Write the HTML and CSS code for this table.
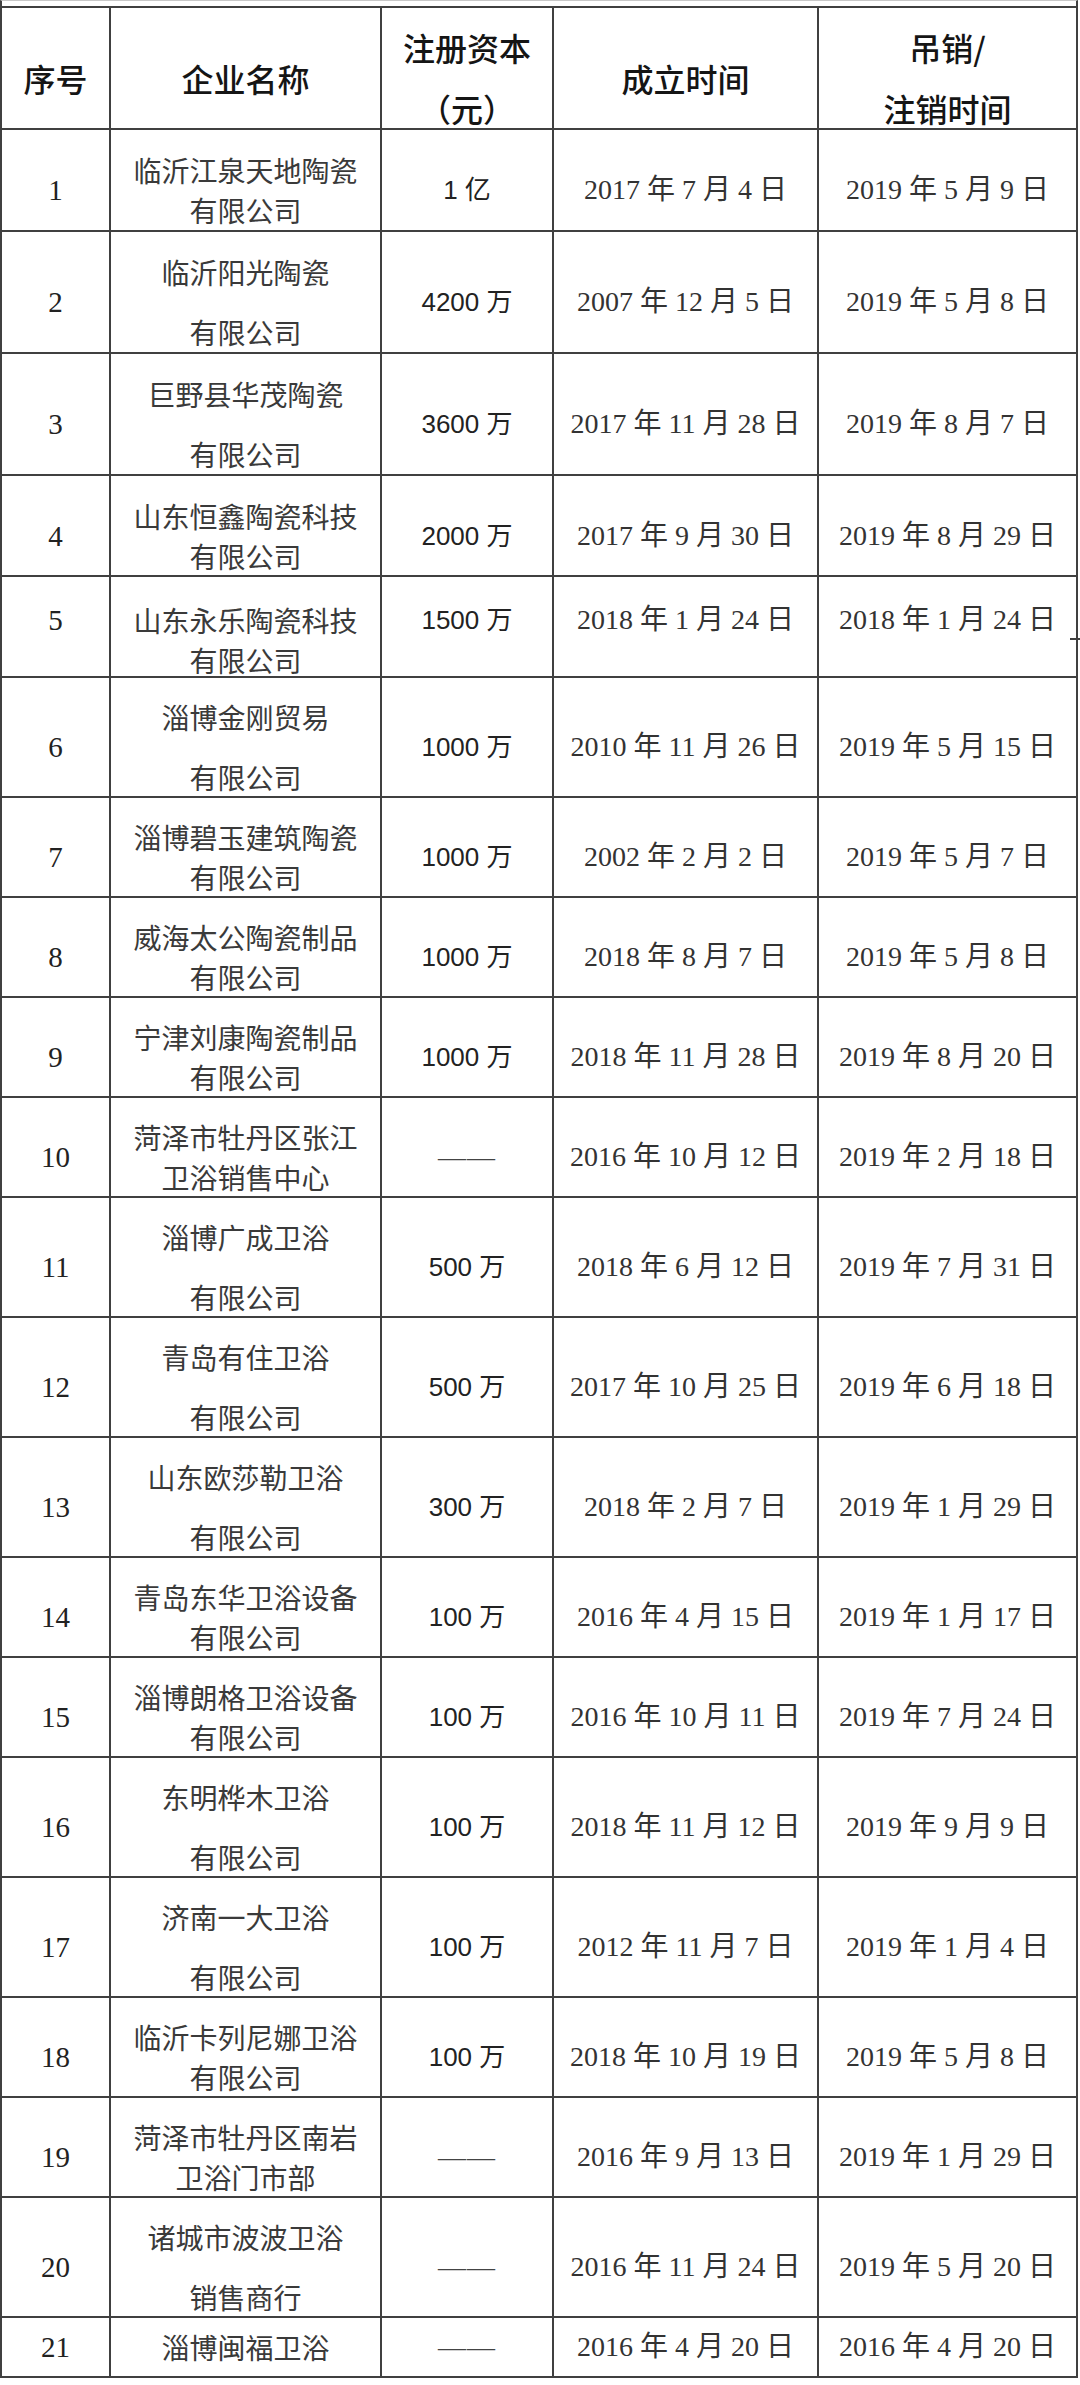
FILE: index.html
```html
<!DOCTYPE html>
<html lang="zh-CN">
<head>
<meta charset="utf-8">
<title>企业名单</title>
<link rel="stylesheet" href="styles.css">
</head>
<body>
<div class="sheet">
  <div class="prev"></div>
  <div class="tbl">
    <div class="row h122 head">
      <div class="c"><span class="ln">序号</span></div>
      <div class="c"><span class="ln">企业名称</span></div>
      <div class="c"><span class="ln">注册资本</span><span class="ln">（元）</span></div>
      <div class="c"><span class="ln">成立时间</span></div>
      <div class="c"><span class="ln">吊销/</span><span class="ln">注销时间</span></div>
    </div>

    <div class="row h102">
      <div class="c no">1</div>
      <div class="c nm"><span class="ln">临沂江泉天地陶瓷</span><span class="ln">有限公司</span></div>
      <div class="c cap">1 亿</div>
      <div class="c dt">2017 年 7 月 4 日</div>
      <div class="c dt">2019 年 5 月 9 日</div>
    </div>
    <div class="row h122">
      <div class="c no">2</div>
      <div class="c nm gap"><span class="ln">临沂阳光陶瓷</span><span class="ln">有限公司</span></div>
      <div class="c cap">4200 万</div>
      <div class="c dt">2007 年 12 月 5 日</div>
      <div class="c dt">2019 年 5 月 8 日</div>
    </div>
    <div class="row h122">
      <div class="c no">3</div>
      <div class="c nm gap"><span class="ln">巨野县华茂陶瓷</span><span class="ln">有限公司</span></div>
      <div class="c cap">3600 万</div>
      <div class="c dt">2017 年 11 月 28 日</div>
      <div class="c dt">2019 年 8 月 7 日</div>
    </div>
    <div class="row h101">
      <div class="c no">4</div>
      <div class="c nm"><span class="ln">山东恒鑫陶瓷科技</span><span class="ln">有限公司</span></div>
      <div class="c cap">2000 万</div>
      <div class="c dt">2017 年 9 月 30 日</div>
      <div class="c dt">2019 年 8 月 29 日</div>
    </div>
    <div class="row h101 top tick">
      <div class="c no">5</div>
      <div class="c nm"><span class="ln">山东永乐陶瓷科技</span><span class="ln">有限公司</span></div>
      <div class="c cap">1500 万</div>
      <div class="c dt">2018 年 1 月 24 日</div>
      <div class="c dt">2018 年 1 月 24 日</div>
    </div>
    <div class="row h120">
      <div class="c no">6</div>
      <div class="c nm gap"><span class="ln">淄博金刚贸易</span><span class="ln">有限公司</span></div>
      <div class="c cap">1000 万</div>
      <div class="c dt">2010 年 11 月 26 日</div>
      <div class="c dt">2019 年 5 月 15 日</div>
    </div>
    <div class="row h100">
      <div class="c no">7</div>
      <div class="c nm"><span class="ln">淄博碧玉建筑陶瓷</span><span class="ln">有限公司</span></div>
      <div class="c cap">1000 万</div>
      <div class="c dt">2002 年 2 月 2 日</div>
      <div class="c dt">2019 年 5 月 7 日</div>
    </div>
    <div class="row h100">
      <div class="c no">8</div>
      <div class="c nm"><span class="ln">威海太公陶瓷制品</span><span class="ln">有限公司</span></div>
      <div class="c cap">1000 万</div>
      <div class="c dt">2018 年 8 月 7 日</div>
      <div class="c dt">2019 年 5 月 8 日</div>
    </div>
    <div class="row h100">
      <div class="c no">9</div>
      <div class="c nm"><span class="ln">宁津刘康陶瓷制品</span><span class="ln">有限公司</span></div>
      <div class="c cap">1000 万</div>
      <div class="c dt">2018 年 11 月 28 日</div>
      <div class="c dt">2019 年 8 月 20 日</div>
    </div>
    <div class="row h100">
      <div class="c no">10</div>
      <div class="c nm"><span class="ln">菏泽市牡丹区张江</span><span class="ln">卫浴销售中心</span></div>
      <div class="c cap"><span class="dash">——</span></div>
      <div class="c dt">2016 年 10 月 12 日</div>
      <div class="c dt">2019 年 2 月 18 日</div>
    </div>
    <div class="row h120">
      <div class="c no">11</div>
      <div class="c nm gap"><span class="ln">淄博广成卫浴</span><span class="ln">有限公司</span></div>
      <div class="c cap">500 万</div>
      <div class="c dt">2018 年 6 月 12 日</div>
      <div class="c dt">2019 年 7 月 31 日</div>
    </div>
    <div class="row h120">
      <div class="c no">12</div>
      <div class="c nm gap"><span class="ln">青岛有住卫浴</span><span class="ln">有限公司</span></div>
      <div class="c cap">500 万</div>
      <div class="c dt">2017 年 10 月 25 日</div>
      <div class="c dt">2019 年 6 月 18 日</div>
    </div>
    <div class="row h120">
      <div class="c no">13</div>
      <div class="c nm gap"><span class="ln">山东欧莎勒卫浴</span><span class="ln">有限公司</span></div>
      <div class="c cap">300 万</div>
      <div class="c dt">2018 年 2 月 7 日</div>
      <div class="c dt">2019 年 1 月 29 日</div>
    </div>
    <div class="row h100">
      <div class="c no">14</div>
      <div class="c nm"><span class="ln">青岛东华卫浴设备</span><span class="ln">有限公司</span></div>
      <div class="c cap">100 万</div>
      <div class="c dt">2016 年 4 月 15 日</div>
      <div class="c dt">2019 年 1 月 17 日</div>
    </div>
    <div class="row h100">
      <div class="c no">15</div>
      <div class="c nm"><span class="ln">淄博朗格卫浴设备</span><span class="ln">有限公司</span></div>
      <div class="c cap">100 万</div>
      <div class="c dt">2016 年 10 月 11 日</div>
      <div class="c dt">2019 年 7 月 24 日</div>
    </div>
    <div class="row h120">
      <div class="c no">16</div>
      <div class="c nm gap"><span class="ln">东明桦木卫浴</span><span class="ln">有限公司</span></div>
      <div class="c cap">100 万</div>
      <div class="c dt">2018 年 11 月 12 日</div>
      <div class="c dt">2019 年 9 月 9 日</div>
    </div>
    <div class="row h120">
      <div class="c no">17</div>
      <div class="c nm gap"><span class="ln">济南一大卫浴</span><span class="ln">有限公司</span></div>
      <div class="c cap">100 万</div>
      <div class="c dt">2012 年 11 月 7 日</div>
      <div class="c dt">2019 年 1 月 4 日</div>
    </div>
    <div class="row h100">
      <div class="c no">18</div>
      <div class="c nm"><span class="ln">临沂卡列尼娜卫浴</span><span class="ln">有限公司</span></div>
      <div class="c cap">100 万</div>
      <div class="c dt">2018 年 10 月 19 日</div>
      <div class="c dt">2019 年 5 月 8 日</div>
    </div>
    <div class="row h100">
      <div class="c no">19</div>
      <div class="c nm"><span class="ln">菏泽市牡丹区南岩</span><span class="ln">卫浴门市部</span></div>
      <div class="c cap"><span class="dash">——</span></div>
      <div class="c dt">2016 年 9 月 13 日</div>
      <div class="c dt">2019 年 1 月 29 日</div>
    </div>
    <div class="row h120">
      <div class="c no">20</div>
      <div class="c nm gap"><span class="ln">诸城市波波卫浴</span><span class="ln">销售商行</span></div>
      <div class="c cap"><span class="dash">——</span></div>
      <div class="c dt">2016 年 11 月 24 日</div>
      <div class="c dt">2019 年 5 月 20 日</div>
    </div>
    <div class="row h60 last">
      <div class="c no">21</div>
      <div class="c nm"><span class="ln">淄博闽福卫浴</span></div>
      <div class="c cap"><span class="dash">——</span></div>
      <div class="c dt">2016 年 4 月 20 日</div>
      <div class="c dt">2016 年 4 月 20 日</div>
    </div>
  </div>
</div>
</body>
</html>
```

FILE: styles.css
```css
html, body {
  margin: 0;
  padding: 0;
  background: #ffffff;
}

.sheet {
  width: 1080px;
  height: 2385px;
  overflow: hidden;
  background: #ffffff;
}

.prev {
  width: 1078px;
  height: 6px;
  box-sizing: border-box;
  border-left: 2px solid #404040;
  border-right: 2px solid #404040;
  border-top: 1px solid #c8c8c8;
}

.tbl {
  width: 1078px;
  box-sizing: border-box;
  border-left: 2px solid #404040;
  border-top: 2px solid #404040;
}

.row {
  display: grid;
  grid-template-columns: 109px 271px 172px 265px 259px;
}

.h122 { height: 122px; }
.h102 { height: 102px; }
.h101 { height: 101px; }
.h120 { height: 120px; }
.h100 { height: 100px; }
.h60  { height: 60px; }

.c {
  box-sizing: border-box;
  border-right: 2px solid #404040;
  border-bottom: 2px solid #404040;
  padding-top: 20px;
  display: flex;
  flex-direction: column;
  justify-content: center;
  align-items: center;
  text-align: center;
  line-height: 40px;
  color: #333333;
  white-space: nowrap;
  min-height: 0;
}

.ln {
  display: block;
}

.head .c {
  font-family: "Noto Sans CJK SC", sans-serif;
  font-size: 32px;
  font-weight: 500;
  line-height: 61px;
  color: #151515;
}

.no {
  font-family: "Liberation Serif", serif;
  font-size: 29px;
  color: #222222;
}

.nm {
  font-family: "Noto Sans CJK SC", sans-serif;
  font-size: 28px;
  font-weight: 400;
  color: #3a3a3a;
}

.nm.gap .ln + .ln {
  margin-top: 20px;
}

.cap {
  font-family: "Liberation Sans", "Noto Sans CJK SC", sans-serif;
  font-size: 26px;
  color: #222222;
}

.dash {
  font-family: "Liberation Serif", serif;
  font-size: 28px;
  letter-spacing: 1px;
  color: #444444;
}

.dt {
  font-family: "Liberation Serif", "Noto Sans CJK SC", serif;
  font-size: 28px;
  color: #333333;
}

.top .c {
  justify-content: flex-start;
  padding-top: 23px;
}

.last .c {
  padding-top: 0;
}

.tick {
  position: relative;
}

.tick::after {
  content: "";
  position: absolute;
  right: -4px;
  top: 61px;
  width: 12px;
  height: 2px;
  background: #404040;
}
```
